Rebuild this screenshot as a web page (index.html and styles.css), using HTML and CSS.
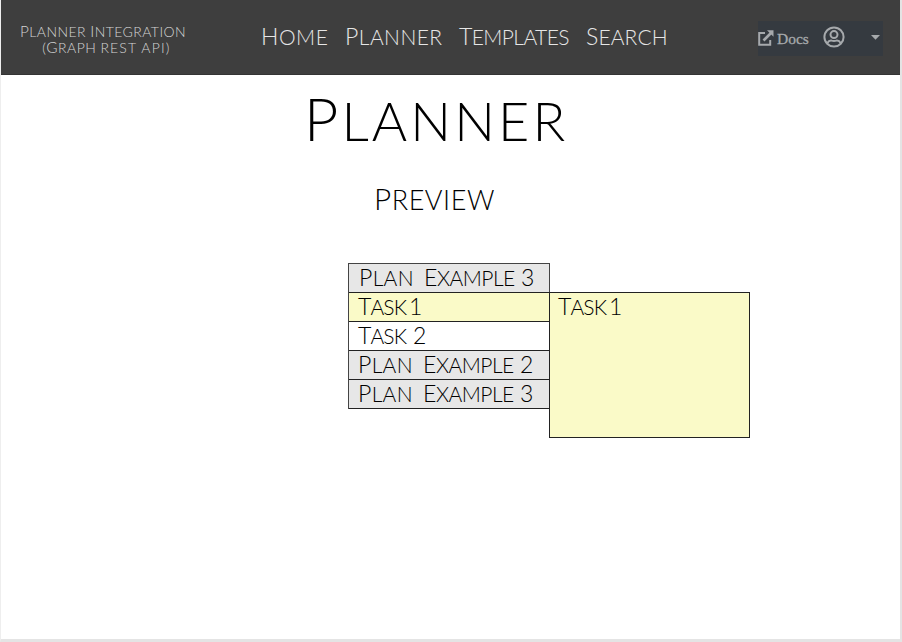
FILE: index.html
```
<!DOCTYPE html>
<html lang="en">
<head>
<meta charset="utf-8">
<title>Planner</title>
<link rel="stylesheet" href="styles.css">
</head>
<body>
<div class="page">
  <header class="bar">
    <div class="brand"><div class="brand-top"><span class="w">Planner</span> <span class="w">Integration</span></div><div class="brand-sub">(<span class="w">Graph</span> <span class="caps">REST API</span>)</div></div>
    <nav class="nav">
      <a class="w home">Home</a><a class="w plan">Planner</a><a class="w temp">Templates</a><a class="w sear">Search</a>
    </nav>
    <div class="tools">
      <svg class="ext" viewBox="0 0 16 16"><path d="M7 3H1.2v11.8h11V10" fill="none" stroke="currentColor" stroke-width="2"/><path d="M5.5 10.5L13 3" stroke="currentColor" stroke-width="2.6"/><path d="M9 .3h6.5v6.5z" fill="currentColor"/></svg>
      <span class="docs">Docs</span>
      <svg class="user" viewBox="0 0 22 22" fill="none" stroke="currentColor" stroke-width="2"><circle cx="11" cy="11" r="9.6"/><circle cx="11" cy="8.6" r="3.5"/><path d="M4.2 17.2c1.2-2 2.7-2.8 4.2-2.6 1.9.6 3.3.6 5.2 0 1.5-.2 3 .6 4.2 2.6"/></svg>
      <svg class="caret" viewBox="0 0 9 5"><path d="M0 0h9L4.5 4.7z" fill="currentColor"/></svg>
    </div>
  </header>
  <main>
    <h1><span class="w">Planner</span></h1>
    <h2><span class="w">Preview</span></h2>
    <div class="board">
      <ul class="list">
        <li class="group lead"><span class="w">Plan</span><span class="w">Example</span><span class="n">3</span></li>
        <li class="task active"><span class="w">Task</span><span class="n">1</span></li>
        <li class="task wide"><span class="w">Task</span><span class="n">2</span></li>
        <li class="group"><span class="w">Plan</span><span class="w">Example</span><span class="n">2</span></li>
        <li class="group"><span class="w">Plan</span><span class="w">Example</span><span class="n">3</span></li>
      </ul>
      <section class="detail task"><span class="w">Task</span><span class="n">1</span></section>
    </div>
  </main>
</div>
</body>
</html>
```
FILE: styles.css
```
* { box-sizing: border-box; }
body { margin: 0; background: #fff; font-family: Lato, sans-serif; font-weight: 300; color: #000; }
.page { width: 902px; height: 642px; border-left: 1px solid #eee; border-right: 2px solid #e4e4e4; border-bottom: 3px solid #e4e4e4; }
.w { display: inline-block; text-transform: uppercase; white-space: nowrap; }
.w::first-letter { font-size: 1.1em; }
.bar { height: 75px; background: #3e3e3e; color: #e6e6e6; display: flex; align-items: flex-start; border-bottom: 1px solid #343434; }
.brand { width: 204px; margin-top: 23px; font-size: 14px; line-height: 16px; letter-spacing: .44px; text-align: center; color: #d4d4d4; flex: none; }
.brand > div { height: 16px; white-space: nowrap; }
.brand-sub { padding-left: 6px; }
.caps { letter-spacing: 1.15px; }
.nav { display: flex; margin: 21px 0 0 56px; font-size: 21px; line-height: 30px; width: 496px; }
.nav .w { flex: none; }
.home { width: 84px; letter-spacing: .5px; }
.plan { width: 114px; letter-spacing: .45px; }
.temp { width: 127px; letter-spacing: -.6px; }
.sear { letter-spacing: .1px; }
.tools { display: flex; align-items: center; width: 125px; height: 35px; margin-top: 21px; background: #353a40; color: #a6a9ac; flex: none; position: relative; left: 1px; }
.tools svg { flex: none; }
.ext { width: 16px; height: 16px; margin-top: -2px; }
.docs { font: 400 15.5px "Liberation Serif", serif; margin-left: 3px; width: 33px; -webkit-text-stroke: .3px currentColor; }
.user { width: 22px; height: 22px; margin: -3px 0 0 13px; }
.caret { width: 9px; height: 5px; margin: -3px 0 0 26px; }
h1 { margin: 7px 0 0; height: 72px; line-height: 72px; font-size: 54px; font-weight: 300; padding-left: 303px; letter-spacing: 3.1px; }
h2 { margin: 26px 0 0; height: 38px; line-height: 38px; font-size: 27px; font-weight: 300; padding-left: 373px; letter-spacing: .55px; }
.board { display: flex; margin: 45px 0 0 347px; align-items: flex-start; }
.list { list-style: none; margin: 0; padding: 0; width: 202px; border: 1px solid #444; border-bottom: 0; }
.list li { height: 29px; border-bottom: 1px solid #222; padding-left: 9px; }
.list li, .detail { display: flex; align-items: flex-start; font-size: 21px; line-height: 26px; }
.n { font-size: 23px; }
.group { background: #e7e7e7; }
.list .lead { padding-left: 10px; }
.group .w:first-child { width: 65px; letter-spacing: .3px; }
.group .w + .w { width: 97px; letter-spacing: -.5px; }
.task .w { width: 51px; letter-spacing: -.9px; }
.wide .w { width: 55px; }
.active { background: #fafac8; }
.detail { width: 201px; height: 146px; margin: 29px 0 0 -1px; padding-left: 8px; border: 1px solid #222; background: #fafac8; }
```
